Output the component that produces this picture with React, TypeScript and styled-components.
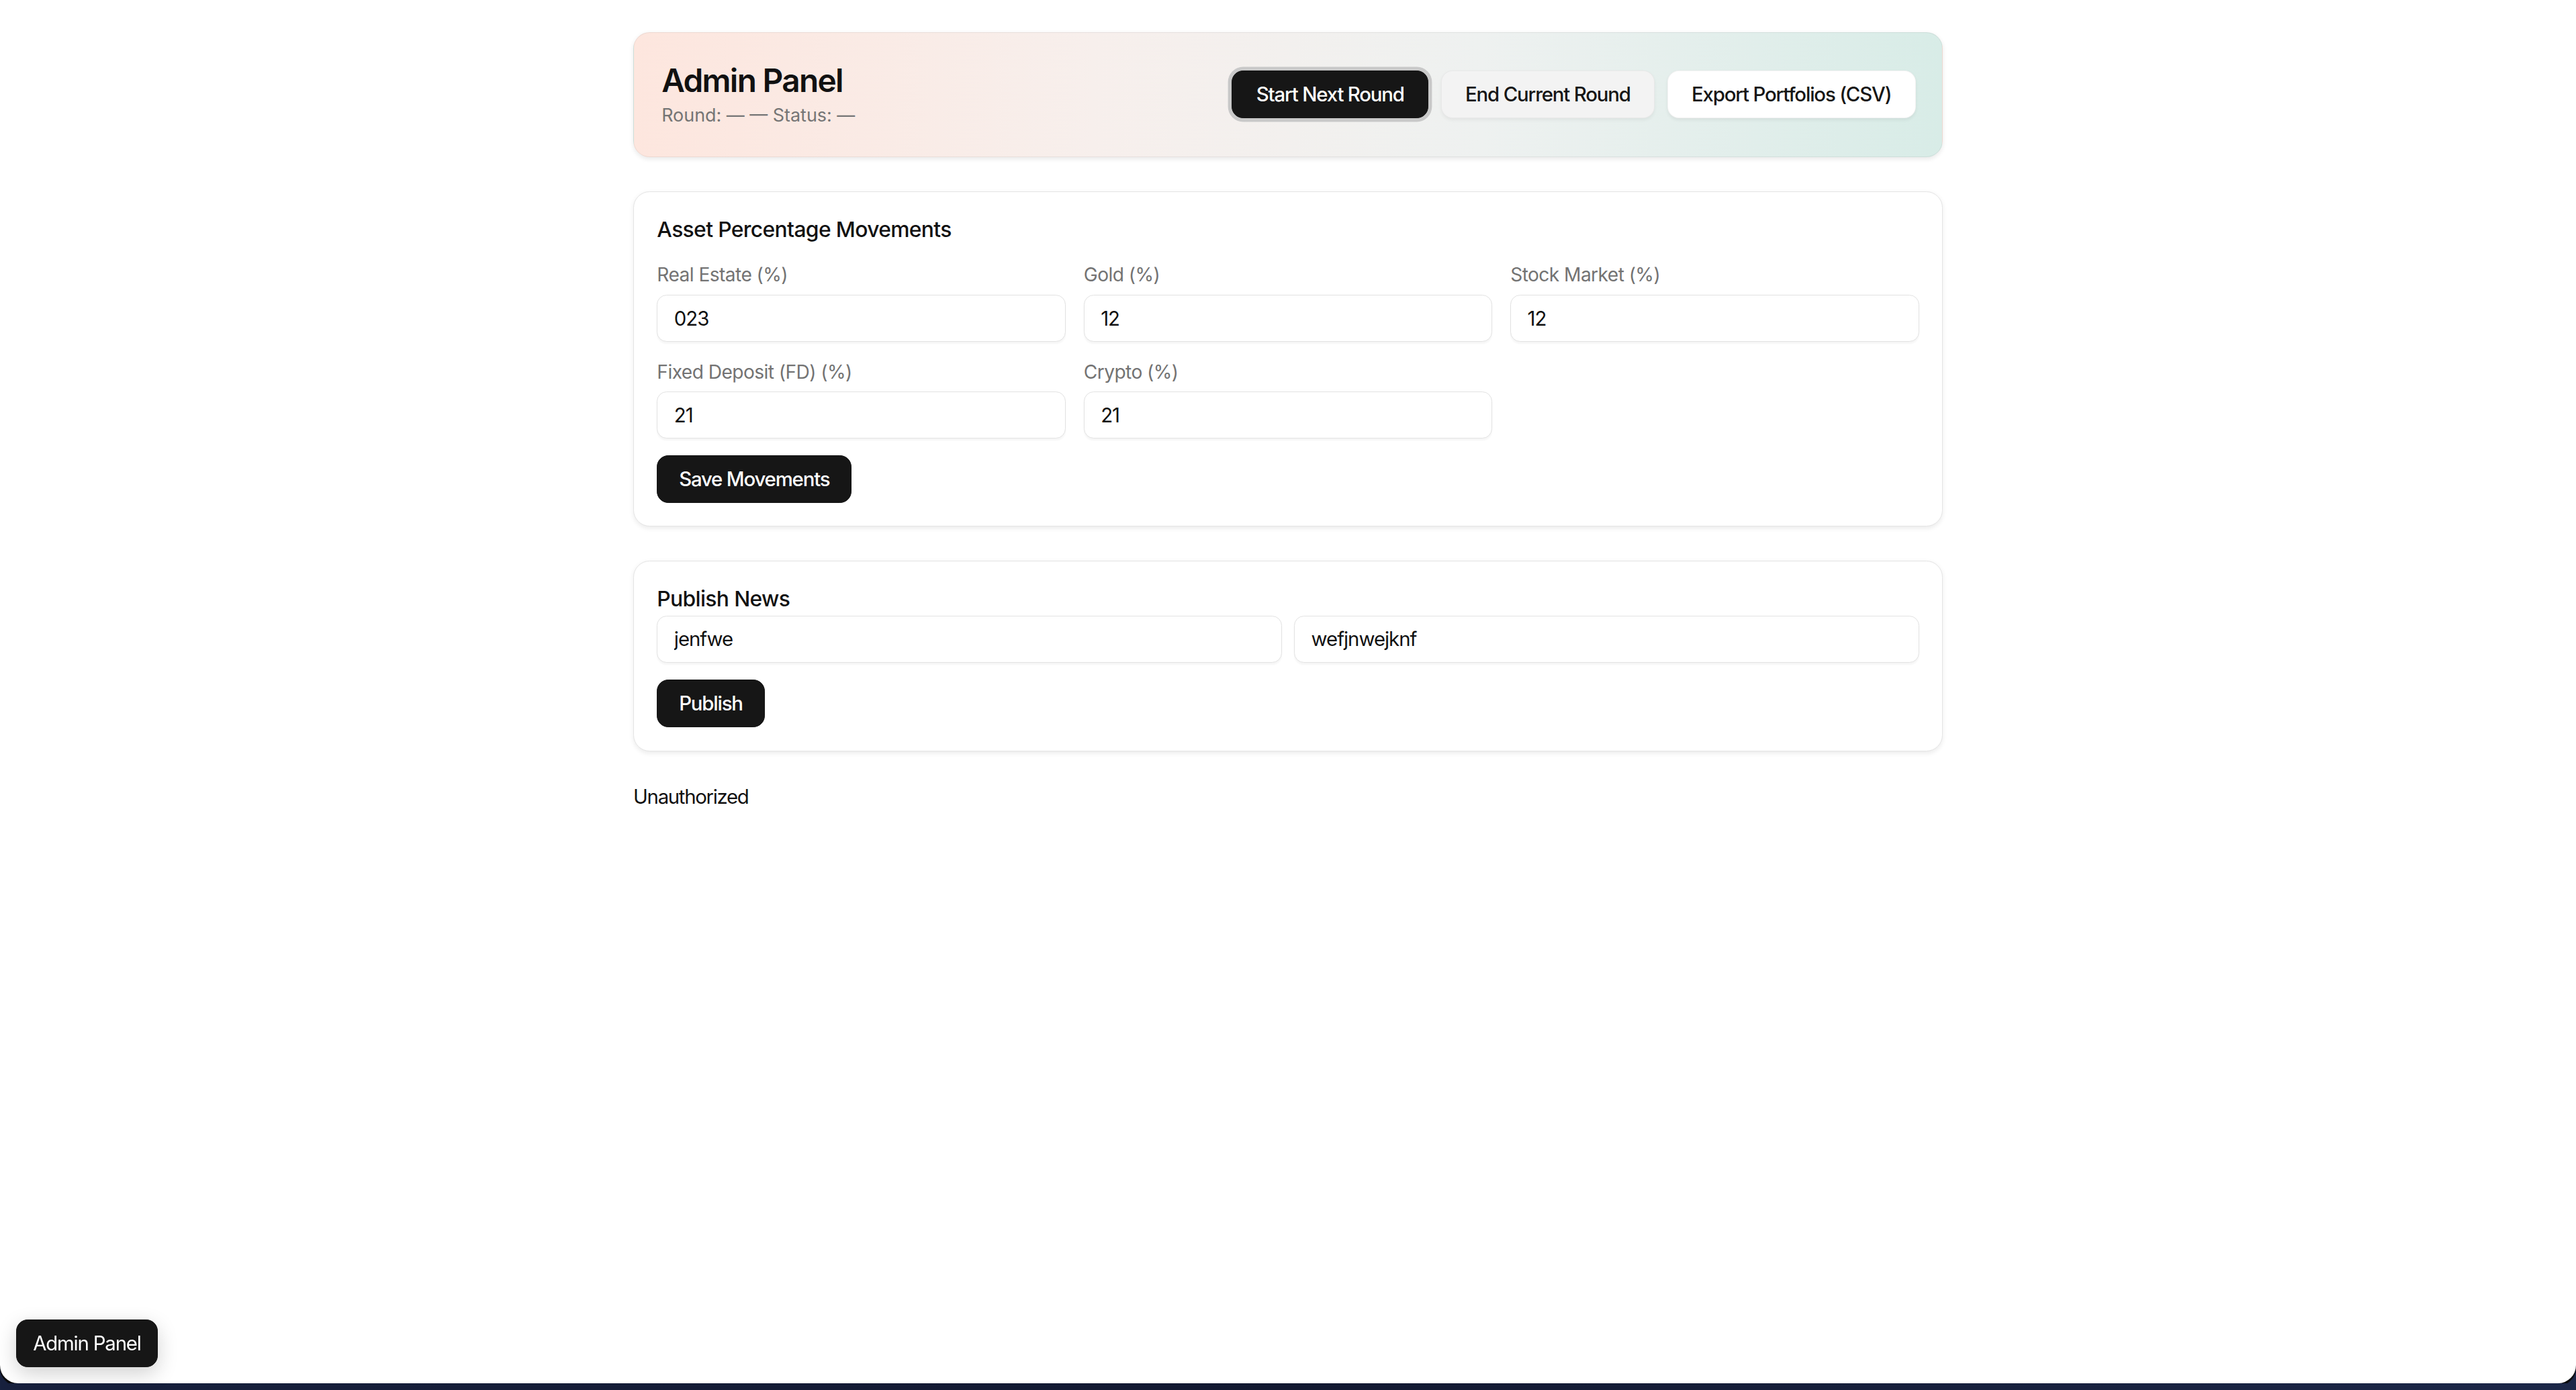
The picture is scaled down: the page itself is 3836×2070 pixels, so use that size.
import React from "react";
import styled, { createGlobalStyle, css } from "styled-components";

const S = 3836 / 1568;
const u = (n: number) => `${(n * S).toFixed(2)}px`;

const GlobalStyle = createGlobalStyle`
  html, body {
    margin: 0;
    padding: 0;
  }
  body {
    background: linear-gradient(90deg, #17203d 0%, #121830 50%, #1c2748 100%);
    font-family: "Inter", "Noto Sans", "Liberation Sans", sans-serif;
    color: #111111;
    letter-spacing: -0.035em;
    -webkit-font-smoothing: antialiased;
  }
  * { box-sizing: border-box; }
`;

const Window = styled.div`
  height: calc(100vh - 10px);
  background: #ffffff;
  border-bottom-left-radius: ${u(11)};
  border-bottom-right-radius: ${u(11)};
  box-shadow: 0 4px 0 #0b0b0d;
  overflow: hidden;
`;

const Main = styled.main`
  width: ${u(797)};
  margin: 0 auto;
  padding-top: ${u(19.6)};
  display: flex;
  flex-direction: column;
  gap: ${u(21)};
`;

const Header = styled.header`
  height: ${u(76)};
  padding: 0 ${u(16)};
  display: flex;
  align-items: center;
  justify-content: space-between;
  border-radius: ${u(10)};
  border: ${u(0.6)} solid rgba(0, 0, 0, 0.06);
  background: linear-gradient(90deg, #fde6de 0%, #f7efec 35%, #eef1f0 65%, #d8ece7 100%);
  box-shadow: 0 ${u(1)} ${u(3)} rgba(0, 0, 0, 0.09);
`;

const TitleBlock = styled.div`
  display: flex;
  flex-direction: column;
  padding-left: ${u(0.8)};
`;

const PageTitle = styled.h1`
  margin: 0;
  font-size: ${u(19.5)};
  line-height: ${u(24)};
  font-weight: 600;
  letter-spacing: -0.035em;
  color: #111111;
`;

const Subtitle = styled.div`
  margin-top: ${u(1)};
  font-size: ${u(11)};
  line-height: ${u(16)};
  letter-spacing: 0;
  color: #757575;
`;

const Actions = styled.div`
  display: flex;
  align-items: center;
  gap: ${u(7.5)};
`;

type Variant = "dark" | "muted" | "light";

const Button = styled.button<{ $variant?: Variant; $ring?: boolean }>`
  height: ${u(29)};
  padding: 0 ${u(13)};
  border-radius: ${u(7)};
  font-family: inherit;
  font-size: ${u(12)};
  font-weight: 500;
  letter-spacing: -0.04em;
  cursor: pointer;
  white-space: nowrap;
  display: inline-flex;
  align-items: center;
  justify-content: center;
  border: ${u(0.6)} solid transparent;
  ${({ $variant = "dark" }) =>
    $variant === "dark"
      ? css`
          background: #161616;
          color: #ffffff;
          border-color: #161616;
        `
      : $variant === "muted"
      ? css`
          background: #f3f3f3;
          color: #161616;
          border-color: rgba(0, 0, 0, 0.04);
          box-shadow: 0 ${u(1)} ${u(2)} rgba(0, 0, 0, 0.05);
        `
      : css`
          background: #ffffff;
          color: #161616;
          border-color: rgba(0, 0, 0, 0.05);
          box-shadow: 0 ${u(1)} ${u(2)} rgba(0, 0, 0, 0.06);
        `}
  ${({ $ring }) =>
    $ring &&
    css`
      box-shadow: 0 0 0 ${u(2.2)} #c9c9c9;
    `}
`;

const HeaderButton = styled(Button)`
  padding: 0 ${u(14.5)};
`;

const Card = styled.section`
  padding: ${u(14)};
  border-radius: ${u(10)};
  border: ${u(0.6)} solid #e4e4e4;
  background: #ffffff;
  box-shadow: 0 ${u(1)} ${u(3)} rgba(0, 0, 0, 0.08);
  display: flex;
  flex-direction: column;
  align-items: flex-start;
`;

const CardTitle = styled.h2<{ $space: number }>`
  margin: 0 0 ${({ $space }) => u($space)} 0;
  font-size: ${u(13)};
  line-height: ${u(18)};
  font-weight: 500;
  letter-spacing: -0.02em;
  color: #111111;
`;

const FieldGrid = styled.div`
  width: 100%;
  display: grid;
  grid-template-columns: repeat(3, 1fr);
  column-gap: ${u(11)};
  row-gap: ${u(10.5)};
  margin-bottom: ${u(10)};
`;

const Field = styled.label`
  display: flex;
  flex-direction: column;
  gap: ${u(4)};
`;

const FieldLabel = styled.span`
  font-size: ${u(11.5)};
  line-height: ${u(16)};
  color: #737373;
`;

const Input = styled.input`
  width: 100%;
  height: ${u(28.5)};
  padding: 0 ${u(10)};
  border-radius: ${u(6)};
  border: ${u(0.8)} solid #e2e2e2;
  background: #ffffff;
  box-shadow: 0 ${u(1)} ${u(1)} rgba(0, 0, 0, 0.04);
  font-family: inherit;
  font-size: ${u(12)};
  letter-spacing: -0.035em;
  color: #111111;
  outline: none;
`;

const NewsRow = styled.div`
  width: 100%;
  display: grid;
  grid-template-columns: 1fr 1fr;
  column-gap: ${u(7.5)};
  margin-bottom: ${u(10.5)};
`;

const Status = styled.p`
  margin: 0;
  font-size: ${u(12)};
  line-height: ${u(14)};
  letter-spacing: -0.045em;
  color: #111111;
`;

const FloatingButton = styled(Button)`
  position: fixed;
  left: ${u(9.7)};
  bottom: ${u(14)};
  font-weight: 400;
  padding: 0 ${u(10)};
  box-shadow: 0 ${u(4)} ${u(12)} rgba(0, 0, 0, 0.18);
`;

const movements = [
  { label: "Real Estate (%)", value: "023" },
  { label: "Gold (%)", value: "12" },
  { label: "Stock Market (%)", value: "12" },
  { label: "Fixed Deposit (FD) (%)", value: "21" },
  { label: "Crypto (%)", value: "21" },
];

export default function App() {
  return (
    <>
      <GlobalStyle />
      <Window>
        <Main>
          <Header>
            <TitleBlock>
              <PageTitle>Admin Panel</PageTitle>
              <Subtitle>Round: — — Status: —</Subtitle>
            </TitleBlock>
            <Actions>
              <HeaderButton $variant="dark" $ring>
                Start Next Round
              </HeaderButton>
              <HeaderButton $variant="muted">End Current Round</HeaderButton>
              <HeaderButton $variant="light">Export Portfolios (CSV)</HeaderButton>
            </Actions>
          </Header>

          <Card>
            <CardTitle $space={10.5}>Asset Percentage Movements</CardTitle>
            <FieldGrid>
              {movements.map((m) => (
                <Field key={m.label}>
                  <FieldLabel>{m.label}</FieldLabel>
                  <Input defaultValue={m.value} />
                </Field>
              ))}
            </FieldGrid>
            <Button $variant="dark">Save Movements</Button>
          </Card>

          <Card>
            <CardTitle $space={1}>Publish News</CardTitle>
            <NewsRow>
              <Input defaultValue="jenfwe" />
              <Input defaultValue="wefjnwejknf" />
            </NewsRow>
            <Button $variant="dark">Publish</Button>
          </Card>

          <Status>Unauthorized</Status>
        </Main>
      </Window>
      <FloatingButton $variant="dark">Admin Panel</FloatingButton>
    </>
  );
}
